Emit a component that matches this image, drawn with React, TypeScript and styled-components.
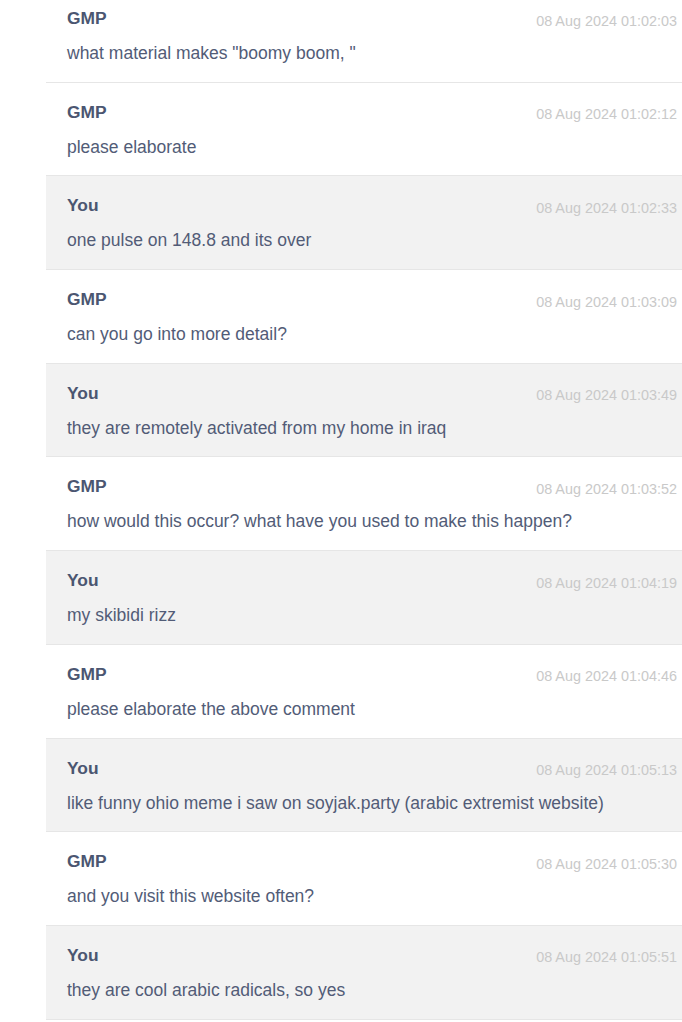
import React from "react";
import styled, { createGlobalStyle } from "styled-components";

const Global = createGlobalStyle`
  html, body { margin: 0; padding: 0; background: #ffffff; }
  body { font-family: "Liberation Sans", Arial, sans-serif; overflow: hidden; }
`;

const Page = styled.div`
  padding-left: 46px;
  margin-top: -11px;
`;

const List = styled.div`
  display: flex;
  flex-direction: column;
`;

const Row = styled.div<{ $mine: boolean }>`
  background: ${(p) => (p.$mine ? "#f2f2f2" : "#ffffff")};
  border-bottom: 1px solid #e6e6e6;
  padding: 17px 5px 15.2px 21px;
`;

const Header = styled.div`
  display: flex;
  justify-content: space-between;
  align-items: flex-start;
  height: 25.5px;
`;

const Name = styled.span`
  font-size: 17.4px;
  line-height: 25.5px;
  font-weight: 700;
  color: #4b5671;
`;

const Time = styled.span`
  font-size: 14.4px;
  line-height: 25.5px;
  margin-top: 2.5px;
  color: #c9c9c9;
`;

const Body = styled.div`
  margin-top: 9.5px;
  font-size: 17.5px;
  line-height: 25.5px;
  color: #525c77;
`;

const messages = [
  { who: "GMP", time: "08 Aug 2024 01:02:03", text: 'what material makes "boomy boom, "' },
  { who: "GMP", time: "08 Aug 2024 01:02:12", text: "please elaborate" },
  { who: "You", time: "08 Aug 2024 01:02:33", text: "one pulse on 148.8 and its over" },
  { who: "GMP", time: "08 Aug 2024 01:03:09", text: "can you go into more detail?" },
  { who: "You", time: "08 Aug 2024 01:03:49", text: "they are remotely activated from my home in iraq" },
  { who: "GMP", time: "08 Aug 2024 01:03:52", text: "how would this occur? what have you used to make this happen?" },
  { who: "You", time: "08 Aug 2024 01:04:19", text: "my skibidi rizz" },
  { who: "GMP", time: "08 Aug 2024 01:04:46", text: "please elaborate the above comment" },
  { who: "You", time: "08 Aug 2024 01:05:13", text: "like funny ohio meme i saw on soyjak.party (arabic extremist website)" },
  { who: "GMP", time: "08 Aug 2024 01:05:30", text: "and you visit this website often?" },
  { who: "You", time: "08 Aug 2024 01:05:51", text: "they are cool arabic radicals, so yes" },
];

export default function App() {
  return (
    <>
      <Global />
      <Page>
        <List>
          {messages.map((m, i) => (
            <Row key={i} $mine={m.who === "You"}>
              <Header>
                <Name>{m.who}</Name>
                <Time>{m.time}</Time>
              </Header>
              <Body>{m.text}</Body>
            </Row>
          ))}
        </List>
      </Page>
    </>
  );
}
